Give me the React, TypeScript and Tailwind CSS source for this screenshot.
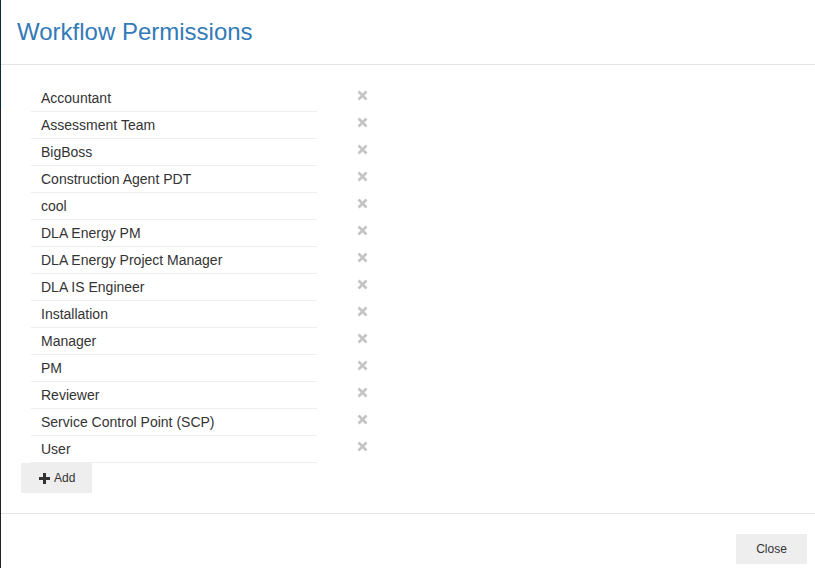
import React from 'react'

const roles = [
  'Accountant',
  'Assessment Team',
  'BigBoss',
  'Construction Agent PDT',
  'cool',
  'DLA Energy PM',
  'DLA Energy Project Manager',
  'DLA IS Engineer',
  'Installation',
  'Manager',
  'PM',
  'Reviewer',
  'Service Control Point (SCP)',
  'User',
]

const RemoveIcon = () => (
  <svg width="11" height="11" viewBox="0 0 11 11" className="block">
    <path d="M1.5 1.5 L9.5 9.5 M9.5 1.5 L1.5 9.5" stroke="#c4c4c4" strokeWidth="2.6" strokeLinecap="butt" />
  </svg>
)

const PlusIcon = () => (
  <svg width="11" height="11" viewBox="0 0 11 11" className="block">
    <rect x="4" y="0" width="3" height="11" fill="#333" />
    <rect x="0" y="4" width="11" height="3" fill="#333" />
  </svg>
)

export default function App() {
  return (
    <div
      className="flex w-[815px] h-[568px] overflow-hidden bg-white text-[#333]"
      style={{ fontFamily: '"Liberation Sans", Arial, sans-serif' }}
    >
      {/* page behind the modal */}
      <div className="flex flex-col w-px shrink-0">
        <div className="h-[110px] bg-[#0d2a3a]"></div>
        <div className="flex-1 bg-[#222]"></div>
      </div>

      <div className="flex flex-col flex-1">
        {/* Header */}
        <div className="h-[65px] border-b border-[#e5e5e5] px-4 pt-[15px]">
          <h4 className="text-[24px] leading-[34px] text-[#337ab7]">Workflow Permissions</h4>
        </div>

        {/* Body */}
        <div className="h-[448px] pt-5 pl-5">
          <div className="ml-[10px]">
            {roles.map((role) => (
              <div key={role} className="flex items-start">
                <div className="w-[286px] h-[27px] border-b border-[#eee] pl-[10px] text-[14px] leading-[26px]">
                  {role}
                </div>
                <button className="ml-[40px] mt-[5px]">
                  <RemoveIcon />
                </button>
              </div>
            ))}
          </div>
          <button className="flex items-center gap-[4px] h-[30px] w-[71px] bg-[#eee] pl-[18px] text-[12px]">
            <PlusIcon />
            <span>Add</span>
          </button>
        </div>

        {/* Footer */}
        <div className="flex flex-1 justify-end border-t border-[#e5e5e5] pt-5 pr-[8px]">
          <button className="h-[30px] w-[71px] bg-[#eee] text-[12px] text-[#333]">Close</button>
        </div>
      </div>
    </div>
  )
}
